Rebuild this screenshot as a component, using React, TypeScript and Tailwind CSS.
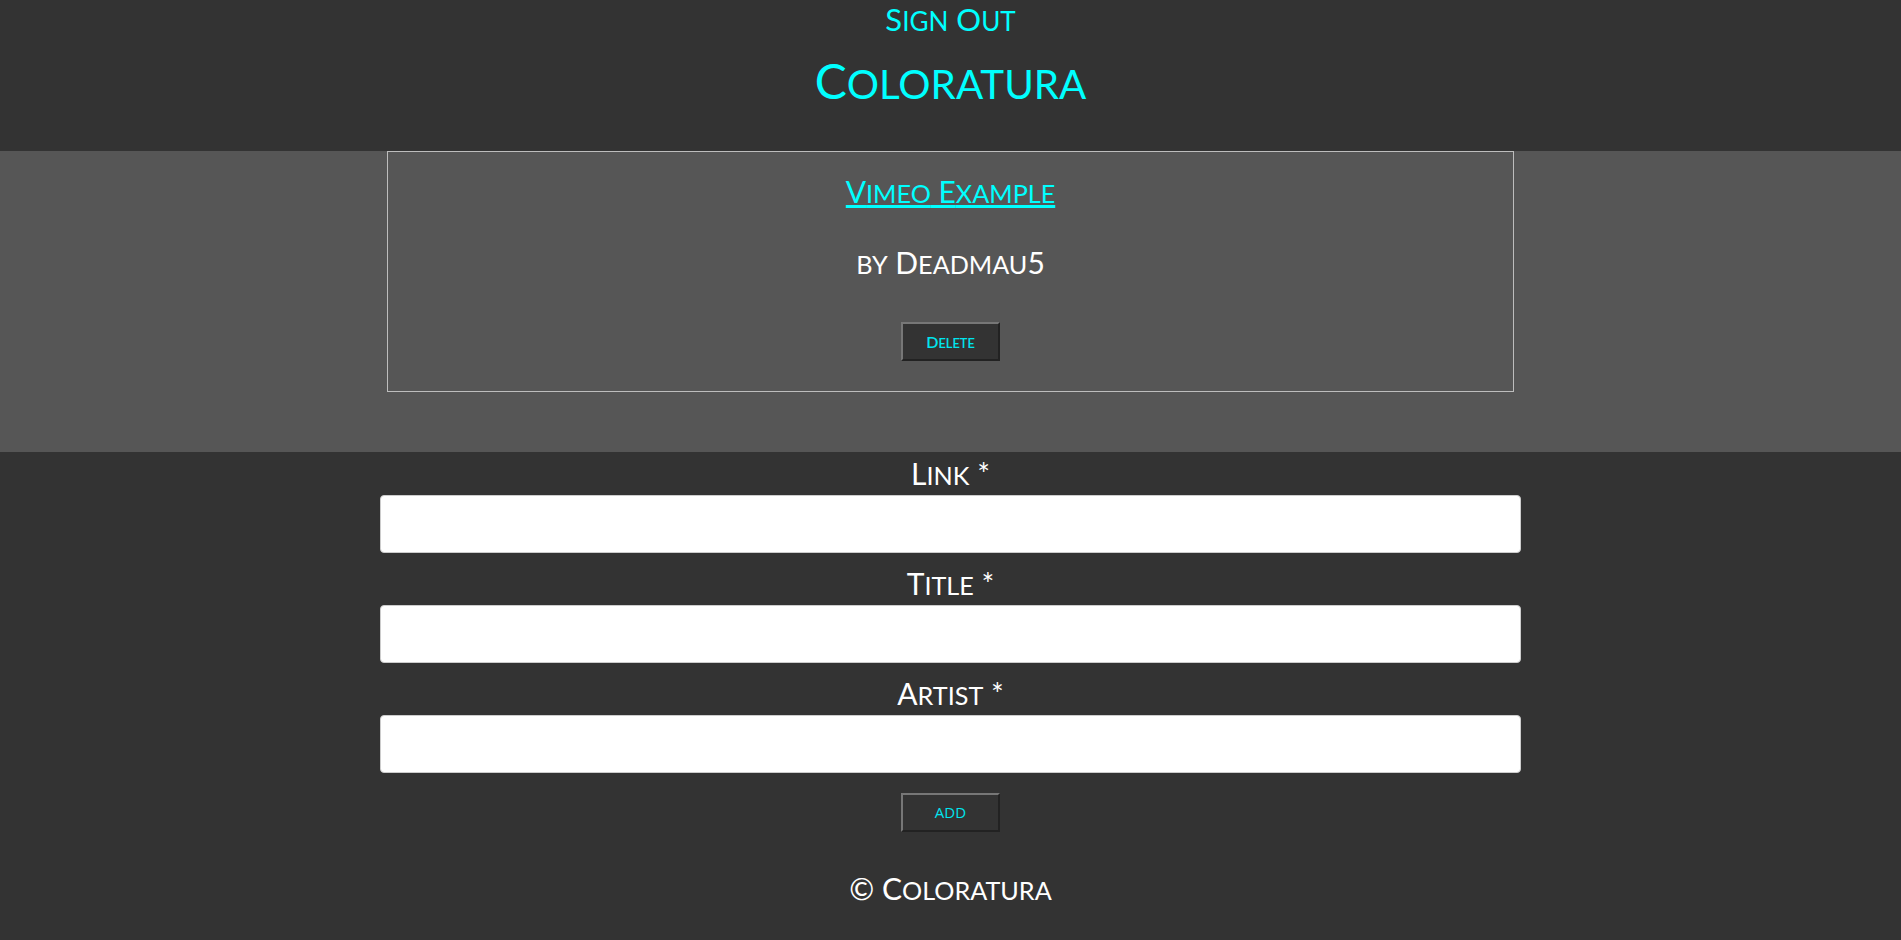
// fake small caps: lowercase runs become uppercase at a reduced size
const SC = ({ text, ratio = "0.84em" }: { text: string; ratio?: string }) => {
  const parts = text.match(/[a-z]+|[^a-z]+/g) || [];
  return (
    <>
      {parts.map((p, i) =>
        /[a-z]/.test(p) ? (
          <span key={i} className="leading-none" style={{ fontSize: ratio }}>{p.toUpperCase()}</span>
        ) : (
          <span key={i} className="leading-none">{p}</span>
        )
      )}
    </>
  );
};

const Label = ({ text }: { text: string }) => (
  <label className="block h-[36px] text-center text-white text-[30px] leading-[36px]">
    <SC text={text} />
  </label>
);

const Field = ({ label }: { label: string }) => (
  <div className="flex flex-col">
    <Label text={label} />
    <input type="text" className="mt-[4px] h-[58px] w-full rounded-[4px] border border-[#ccc] bg-white px-3 text-black outline-none" />
  </div>
);

const FlatButton = ({ text, small }: { text: string; small?: boolean }) => (
  <button
    className={`h-[39px] w-[99px] bg-[#333333] border-2 border-t-[#777] border-l-[#777] border-b-[#222] border-r-[#222] text-[#00e5ee] leading-none ${
      small ? "text-[15px] uppercase font-['Open_Sans',sans-serif]" : "text-[16px] font-semibold"
    }`}
  >
    {small ? text : <SC text={text} ratio="0.8em" />}
  </button>
);

export default function App() {
  return (
    <div className="min-h-[940px] bg-[#333333] font-['Lato',sans-serif]">
      <header className="flex h-[151px] flex-col items-center">
        <a href="#" className="mt-[1px] block h-[36px] text-[31px] leading-[36px] text-[#00ffff]">
          <SC text="Sign Out" />
        </a>
        <h1 className="mt-[14px] h-[60px] text-[48px] leading-[60px] text-[#00ffff]">
          <SC text="Coloratura" />
        </h1>
      </header>

      <section className="bg-[#565656] pb-[60px]">
        <div className="mx-auto flex h-[241px] w-[1127px] flex-col items-center border border-[#bdbdbd]">
          <a href="#" className="mt-[21px] block h-[36px] text-[30px] leading-[36px] text-[#00ffff] underline">
            <SC text="Vimeo Example" />
          </a>
          <p className="mt-[35px] h-[36px] text-[30px] leading-[36px] text-white">
            <SC text="by Deadmau5" />
          </p>
          <div className="mt-[42px]">
            <FlatButton text="Delete" />
          </div>
        </div>
      </section>

      <form className="mx-auto flex w-[1141px] flex-col gap-[12px] pt-[3px]">
        <Field label="Link *" />
        <Field label="Title *" />
        <Field label="Artist *" />
        <div className="mt-[8px] flex justify-center">
          <FlatButton text="Add" small />
        </div>
      </form>

      <footer className="h-[36px] mt-[38px] text-center text-[30px] leading-[36px] text-white">
        <SC text="© Coloratura" />
      </footer>
    </div>
  );
}
